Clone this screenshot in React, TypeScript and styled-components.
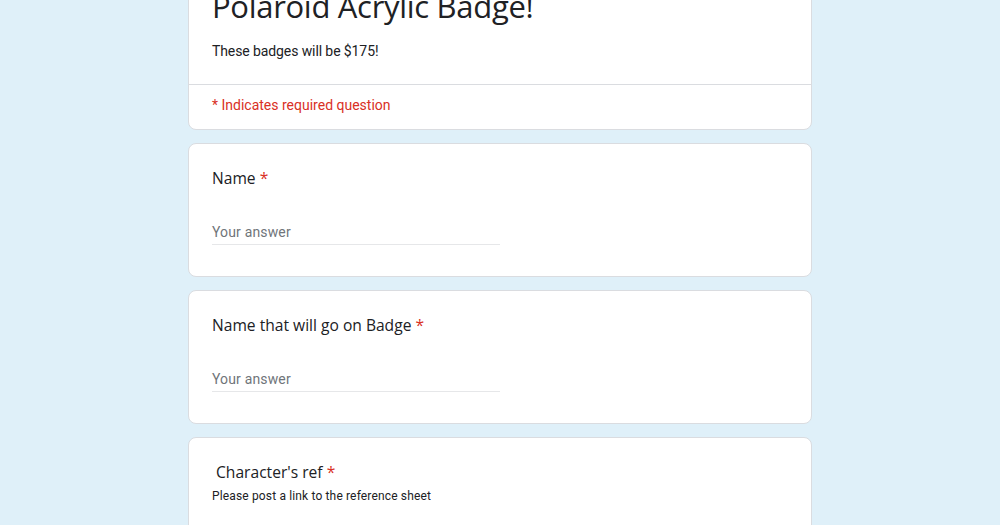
import React from "react";
import styled, { createGlobalStyle } from "styled-components";

const GlobalStyle = createGlobalStyle`
  html, body {
    margin: 0;
    padding: 0;
    background: #dff0f9;
    overflow: hidden;
  }
  body {
    font-family: Roboto, "Liberation Sans", Arial, sans-serif;
    color: #202124;
  }
`;

const Page = styled.div`
  width: 624px;
  margin: -39px auto 0;
  display: flex;
  flex-direction: column;
  gap: 13px;
`;

const Card = styled.section`
  background: #ffffff;
  border: 1px solid #dadce0;
  border-radius: 8px;
  overflow: hidden;
`;

const HeaderBody = styled.div`
  padding: 24px 23px 23px;
`;

const Title = styled.h1`
  margin: 0;
  font-family: "Open Sans", Roboto, sans-serif;
  font-weight: 400;
  font-size: 31px;
  line-height: 40px;
  letter-spacing: -0.3px;
`;

const Subtitle = styled.p`
  margin: 15px 0 0;
  font-size: 14px;
  line-height: 20px;
  letter-spacing: -0.1px;
`;

const HeaderFoot = styled.div`
  border-top: 1px solid #dadce0;
  padding: 10px 23px 14px;
  font-size: 14px;
  line-height: 20px;
  color: #d93025;
`;

const Question = styled(Card)`
  padding: 22px 23px 31px;
`;

const QTitle = styled.div`
  font-family: "Open Sans", Roboto, sans-serif;
  font-size: 15.6px;
  line-height: 24px;
  white-space: pre;
`;

const Star = styled.span`
  color: #d93025;
`;

const Help = styled.div`
  margin-top: 4px;
  font-size: 12px;
  line-height: 16px;
  letter-spacing: 0.15px;
`;

const Answer = styled.div`
  margin-top: 32px;
  width: 288px;
  padding-bottom: 2px;
  border-bottom: 1px solid #e6e7e9;
  font-size: 14px;
  line-height: 20px;
  color: #70757a;
  letter-spacing: 0.15px;
`;

type Q = { title: string; help?: string };

const questions: Q[] = [
  { title: "Name" },
  { title: "Name that will go on Badge" },
  { title: " Character's ref", help: "Please post a link to the reference sheet" },
];

const App: React.FC = () => {
  return (
    <>
      <GlobalStyle />
      <Page>
        <Card>
          <HeaderBody>
            <Title>Polaroid Acrylic Badge!</Title>
            <Subtitle>These badges will be $175!</Subtitle>
          </HeaderBody>
          <HeaderFoot>* Indicates required question</HeaderFoot>
        </Card>
        {questions.map((q) => (
          <Question key={q.title}>
            <QTitle>
              {q.title} <Star>*</Star>
            </QTitle>
            {q.help && <Help>{q.help}</Help>}
            <Answer>Your answer</Answer>
          </Question>
        ))}
      </Page>
    </>
  );
};

export default App;
